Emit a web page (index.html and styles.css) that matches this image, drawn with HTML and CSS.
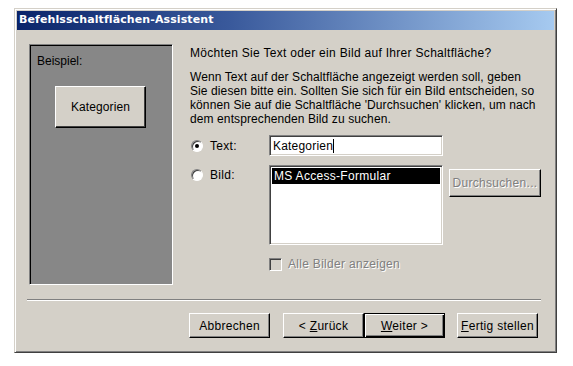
FILE: index.html
```html
<!DOCTYPE html>
<html lang="de">
<head>
  <meta charset="UTF-8">
  <title>Befehlsschaltflächen-Assistent</title>
  <link rel="stylesheet" href="styles.css">
</head>
<body>
  <div class="window">
    <div class="titlebar">Befehlsschaltflächen-Assistent</div>

    <div class="main">
      <div class="preview">
        <div class="preview-label">Beispiel:</div>
        <div class="preview-btn">Kategorien</div>
      </div>

      <div class="form">
        <p class="question">Möchten Sie Text oder ein Bild auf Ihrer Schaltfläche?</p>
        <p class="hint">Wenn Text auf der Schaltfläche angezeigt werden soll, geben<br>
          Sie diesen bitte ein. Sollten Sie sich für ein Bild entscheiden, so<br>
          können Sie auf die Schaltfläche 'Durchsuchen' klicken, um nach<br>
          dem entsprechenden Bild zu suchen.</p>

        <div class="options">
          <label class="opt opt-text"><span class="radio checked"></span>Text:</label>
          <div class="textbox">Kategorien<span class="caret"></span></div>
          <div></div>

          <label class="opt opt-bild"><span class="radio"></span>Bild:</label>
          <div class="listbox">
            <div class="list-item selected">MS Access-Formular</div>
          </div>
          <div class="browse-cell">
            <button class="btn disabled browse">Durchsuchen...</button>
          </div>

          <div></div>
          <label class="check disabled"><span class="checkbox"></span>Alle Bilder anzeigen</label>
          <div></div>
        </div>
      </div>
    </div>

    <div class="separator"></div>

    <div class="footer">
      <button class="btn">Abbrechen</button>
      <div class="btn-pair">
        <button class="btn">&lt; <u>Z</u>urück</button>
        <button class="btn default"><u>W</u>eiter &gt;</button>
      </div>
      <button class="btn"><u>F</u>ertig stellen</button>
    </div>
  </div>
</body>
</html>
```

FILE: styles.css
```css
:root {
  --face: #d4d0c8;
  --shadow: #808080;
  --dark: #404040;
  --light: #fff;
  --panel: #878787;
}
* { box-sizing: border-box; margin: 0; padding: 0; }
body {
  background: #fff;
  padding: 8px 0 0 14px;
  font-family: "Liberation Sans", Arial, sans-serif;
  font-size: 12px;
  letter-spacing: 0.3px;
  color: #000;
}
.window {
  width: 543px;
  height: 345px;
  background: var(--face);
  border: 1px solid;
  border-color: var(--face) var(--dark) var(--dark) var(--face);
  box-shadow: inset 1px 1px 0 var(--light), inset -1px -1px 0 var(--shadow);
  padding: 2px;
  display: flex;
  flex-direction: column;
}
.titlebar {
  height: 19px;
  padding: 2px 0 0 2px;
  background: linear-gradient(to right, #0a246a 0%, #3a5a9c 40%, #a6caf0 100%);
  color: #fff;
  font-family: "DejaVu Sans", Verdana, sans-serif;
  font-weight: bold;
  font-size: 11px;
  letter-spacing: 0.1px;
}
.main {
  display: flex;
  padding: 14px 0 0 12px;
  height: 258px;
}
.preview {
  width: 144px;
  height: 241px;
  background: var(--panel);
  border: 1px solid;
  border-color: var(--shadow) var(--light) var(--light) var(--shadow);
  box-shadow: inset 1px 1px 0 #000;
  padding: 9px 0 0 7px;
}
.preview-label {
  height: 14px;
  letter-spacing: 0;
}
.preview-btn {
  width: 91px;
  height: 42px;
  margin: 18px 0 0 18px;
  background: var(--face);
  border: 1px solid;
  border-color: var(--light) #000 #000 var(--light);
  box-shadow: inset -1px -1px 0 var(--dark);
  display: flex;
  align-items: center;
  justify-content: center;
  letter-spacing: 0.1px;
}
.form {
  margin-left: 17px;
  width: 352px;
}
.question {
  margin-top: 2px;
  line-height: 14px;
}
.hint {
  margin-top: 10px;
  line-height: 14px;
  white-space: nowrap;
  letter-spacing: 0.1px;
}
.options {
  margin-top: 9px;
  display: grid;
  grid-template-columns: 79px 174px 98px;
  grid-template-rows: 21px 80px 30px;
  row-gap: 9px;
}
.options > :nth-child(n+7) { margin-top: 3px; }
.opt {
  display: flex;
  align-items: center;
  gap: 7px;
  height: 21px;
  padding-left: 1px;
}
.opt-bild { margin-top: -1px; }
.radio {
  width: 12px;
  height: 12px;
  border-radius: 50%;
  background: #fff;
  border: 1px solid;
  border-color: var(--shadow) var(--light) var(--light) var(--shadow);
  box-shadow: inset 1px 1px 0 var(--dark);
  position: relative;
}
.radio.checked::after {
  content: "";
  position: absolute;
  left: 3px;
  top: 3px;
  width: 4px;
  height: 4px;
  border-radius: 50%;
  background: #000;
}
.textbox, .listbox {
  background: #fff;
  border: 1px solid;
  border-color: var(--shadow) var(--light) var(--light) var(--shadow);
  box-shadow: inset 1px 1px 0 var(--dark), inset -1px -1px 0 var(--face);
}
.textbox {
  height: 21px;
  padding: 3px 0 0 3px;
  display: flex;
  align-items: flex-start;
  letter-spacing: 0.2px;
}
.caret {
  display: inline-block;
  width: 1px;
  height: 14px;
  background: #000;
}
.listbox {
  height: 80px;
  padding: 2px;
}
.list-item {
  height: 16px;
  padding: 1px 0 0 2px;
}
.list-item.selected {
  background: #000;
  color: #fff;
}
.browse-cell {
  padding: 4px 0 0 6px;
}
.btn {
  width: 81px;
  height: 25px;
  background: var(--face);
  border: 1px solid;
  border-color: var(--light) #000 #000 var(--light);
  box-shadow: inset -1px -1px 0 var(--shadow);
  font-family: "Liberation Sans", Arial, sans-serif;
  font-size: 12px;
  letter-spacing: 0.3px;
  color: #000;
}
.btn.disabled {
  color: var(--shadow);
  text-shadow: 1px 1px 0 var(--light);
}
.browse {
  width: 92px;
  height: 28px;
}
.check {
  display: flex;
  align-items: center;
  gap: 6px;
  height: 14px;
}
.check.disabled {
  color: var(--shadow);
  text-shadow: 1px 1px 0 var(--light);
}
.checkbox {
  width: 13px;
  height: 13px;
  border: 1px solid;
  border-color: var(--shadow) var(--light) var(--light) var(--shadow);
  box-shadow: inset 1px 1px 0 var(--dark);
  background: var(--face);
}
.separator {
  margin: 11px 0 0 10px;
  width: 514px;
  height: 2px;
  border-top: 1px solid var(--shadow);
  border-bottom: 1px solid var(--light);
}
.footer {
  display: flex;
  align-items: center;
  padding: 12px 0 0 172px;
}
.btn-pair {
  display: flex;
  margin-left: 13px;
}
.btn.default {
  border: 1px solid #000;
  box-shadow: inset 1px 1px 0 var(--light), inset -1px -1px 0 #000, inset -2px -2px 0 var(--shadow);
}
.footer > .btn:last-child { margin-left: 12px; }
```
